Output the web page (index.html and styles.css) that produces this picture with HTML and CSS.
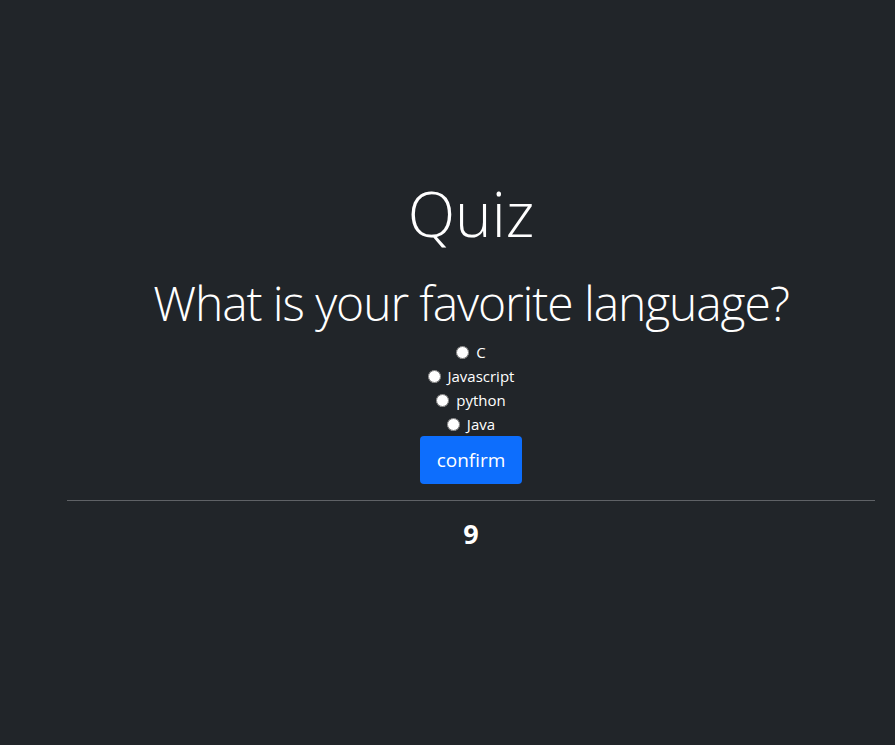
FILE: index.html
```html
<!DOCTYPE html>
<html lang="en">
<head>
<meta charset="utf-8">
<title>Quiz</title>
<link rel="stylesheet" href="styles.css">
</head>
<body>
<main class="page">
  <h1 class="title">Quiz</h1>
  <h2 class="question">What is your favorite language?</h2>
  <form class="quiz-form">
    <label class="option"><input type="radio" name="lang" value="c"> C</label>
    <label class="option"><input type="radio" name="lang" value="js"> Javascript</label>
    <label class="option"><input type="radio" name="lang" value="py"> python</label>
    <label class="option"><input type="radio" name="lang" value="java"> Java</label>
    <button type="button" class="btn-confirm">confirm</button>
  </form>
  <hr class="divider">
  <h3 class="score">9</h3>
</main>
</body>
</html>
```
FILE: styles.css
```css
html, body {
  margin: 0;
  padding: 0;
  background: #212529;
  color: #fff;
  font-family: "Open Sans", "Noto Sans", sans-serif;
  height: 100%;
}
.page {
  padding: 175px 20px 0 67px;
  text-align: center;
}
.title {
  margin: 0;
  font-size: 62px;
  font-weight: 300;
  line-height: 76px;
}
.question {
  margin: 23px 0 0;
  font-size: 48px;
  font-weight: 300;
  line-height: 58px;
  letter-spacing: -1.1px;
}
.quiz-form {
  display: flex;
  flex-direction: column;
  align-items: center;
  margin-top: 8px;
}
.option {
  display: block;
  font-size: 15px;
  line-height: 24px;
}
.option input {
  width: 13px;
  height: 13px;
  margin: 0 3px 0 0;
  vertical-align: -1px;
  accent-color: #fff;
}
.btn-confirm {
  margin-top: 0;
  width: 102px;
  height: 48px;
  background: #0d6efd;
  color: #fff;
  border: none;
  border-radius: 4px;
  font-family: inherit;
  font-size: 19px;
  padding: 0;
}
.divider {
  margin: 16px 0 0;
  border: 0;
  border-top: 1px solid #5f6266;
}
.score {
  margin: 17px 0 0;
  font-size: 27px;
  font-weight: 700;
  line-height: 32px;
}
```
